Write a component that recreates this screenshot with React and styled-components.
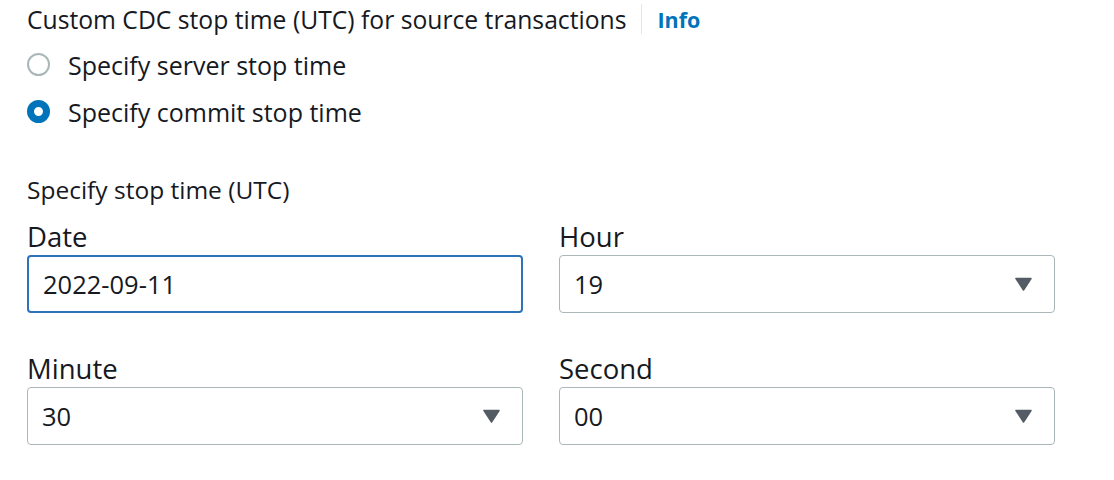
import React from 'react'
import styled, {createGlobalStyle} from 'styled-components'

const GlobalStyle = createGlobalStyle`
  body {
    margin: 0;
    background: #fff;
    font-family: 'Open Sans', 'Noto Sans', sans-serif;
    color: #16191f;
  }
`

const Page = styled.div`
  padding: 2px 0 0 27px;
  width: 1028px;
`

const Header = styled.div`
  display: flex;
  align-items: center;
  height: 34px;
  font-size: 24.7px;
`

const HeaderDivider = styled.span`
  width: 1px;
  height: 30px;
  background: #e3e6e8;
  margin: 0 15px;
`

const InfoLink = styled.a`
  color: #0073bb;
  font-weight: 700;
  font-size: 21.5px;
  text-decoration: none;
`

const RadioGroup = styled.div`
  display: flex;
  flex-direction: column;
  gap: 12px;
  margin-top: 11px;
`

const RadioRow = styled.label`
  display: flex;
  align-items: center;
  gap: 18px;
  font-size: 25px;
  height: 35px;
`

const RadioDot = styled.span`
  box-sizing: border-box;
  width: 23px;
  height: 23px;
  border-radius: 50%;
  border: ${p => (p.$checked ? '7px solid #0073bb' : '2px solid #aab7b8')};
  background: #fff;
`

const Section = styled.div`
  margin-top: 45px;
`

const SectionLabel = styled.div`
  font-size: 24.5px;
  height: 32px;
  line-height: 32px;
  margin-bottom: 13px;
`

const Grid = styled.div`
  display: grid;
  grid-template-columns: 496px 496px;
  column-gap: 36px;
  row-gap: 38px;
`

const Field = styled.div`
  display: flex;
  flex-direction: column;
`

const FieldLabel = styled.div`
  font-size: 27.5px;
  height: 36px;
  line-height: 36px;
`

const Control = styled.div`
  box-sizing: border-box;
  height: 58px;
  display: flex;
  align-items: center;
  justify-content: space-between;
  padding: 0 22px 0 14px;
  border: ${p => (p.$focused ? '2px solid #2e73b8' : '1px solid #aab7b8')};
  border-radius: 4px;
  font-size: 25.5px;
`

const Caret = () => (
  <svg width="17" height="14" viewBox="0 0 17 14">
    <path d="M1 1.5h15L8.5 13z" fill="#545b64" stroke="#545b64" strokeWidth="1.5" strokeLinejoin="round" />
  </svg>
)

const fields = [
  {label: 'Date', value: '2022-09-11', input: true},
  {label: 'Hour', value: '19'},
  {label: 'Minute', value: '30'},
  {label: 'Second', value: '00'},
]

export default function App() {
  return (
    <Page>
      <GlobalStyle />
      <Header>
        Custom CDC stop time (UTC) for source transactions
        <HeaderDivider />
        <InfoLink href="#">Info</InfoLink>
      </Header>
      <RadioGroup>
        <RadioRow>
          <RadioDot />
          Specify server stop time
        </RadioRow>
        <RadioRow>
          <RadioDot $checked />
          Specify commit stop time
        </RadioRow>
      </RadioGroup>
      <Section>
        <SectionLabel>Specify stop time (UTC)</SectionLabel>
        <Grid>
          {fields.map(f => (
            <Field key={f.label}>
              <FieldLabel>{f.label}</FieldLabel>
              <Control $focused={f.input}>
                {f.value}
                {!f.input && <Caret />}
              </Control>
            </Field>
          ))}
        </Grid>
      </Section>
    </Page>
  )
}
